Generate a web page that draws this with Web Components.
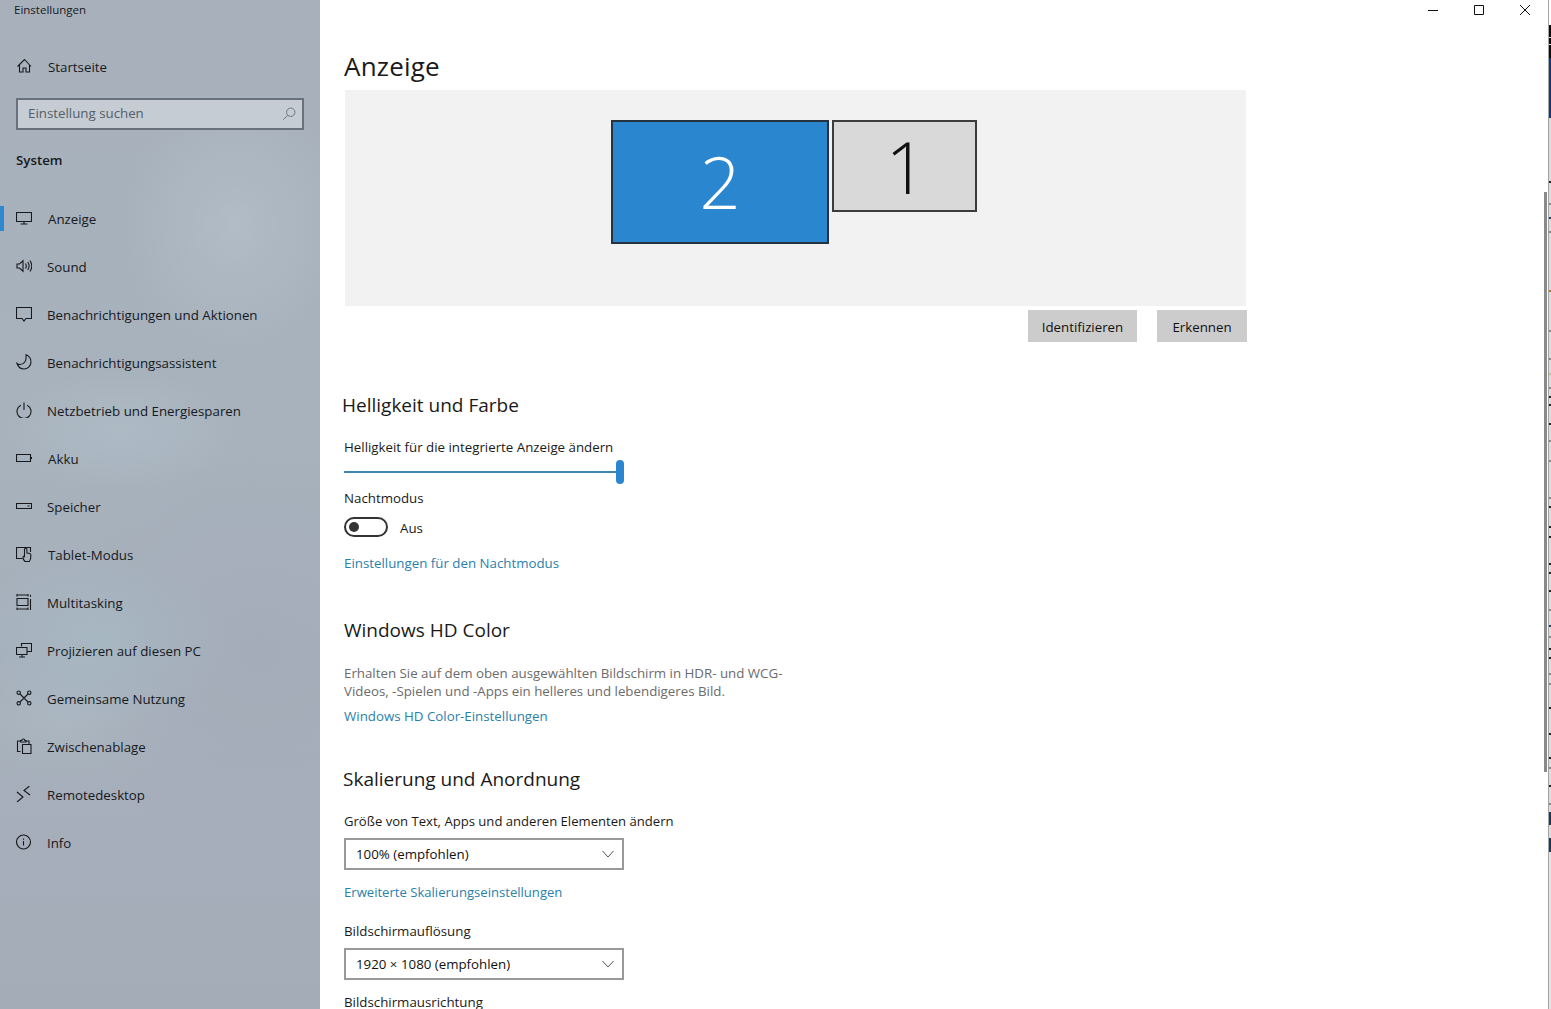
<!DOCTYPE html>
<html lang="de">
<head>
<meta charset="utf-8">
<title>Einstellungen</title>
<style>
  html, body { margin: 0; height: 100%; overflow: hidden; background: #fff; }
  body { font: 13.3px/20px "Open Sans", "Noto Sans", sans-serif; color: #1a1a1a; }
</style>
</head>
<body>
<settings-app></settings-app>

<script>
const ICONS = {
  home: '<path d="M1.500 8.500 8.500 1.500l6.500 7M3.500 6.800v7.200h3.500v-4h3v4h3.500V6.800"/>',
  display: '<path d="M.5 2.500h15v9H.5zM8 11.500v2.500M4.500 14h7"/>',
  sound: '<path d="M1 6h2.500L7 2.800v10.400L3.500 10H1zM9.500 5.500c1 1.500 1 3.500 0 5M11.700 4c1.800 2.500 1.800 5.500 0 8M13.900 2.500c2.400 3.500 2.400 7.500 0 11"/>',
  notify: '<path d="M.5 1.500h15v11H10l-2 2.500-2-2.500H.5z"/>',
  moon: '<path d="M10 .8c2.500 1 5 3.700 5 7.200a7 7 0 0 1-7 7c-3.500 0-6-2.500-7-5.500 1 .8 2 1 3 1 4 0 6.800-3.500 6-9.700z"/>',
  power: '<path d="M4.800 3.200a7 7 0 1 0 6.400 0M8 .5v7.500"/>',
  battery: '<path d="M.5 4.500h14v7H.5zM15.500 7v2"/>',
  storage: '<path d="M.5 5.500h15v5H.5zM11.500 8h2"/>',
  tablet: '<path d="M6.500 12.500H.5v-11h14V6M9 15.500c-1-1-2-2.500-2-4.500 0-1 1-1 1.500-.5V3.500a1.200 1.200 0 0 1 2.400 0V7c2 0 4 .5 4 2.500 0 2.500-.5 4.800-1.500 6z"/>',
  multitask: '<path d="M1 1h11M1 0v2.500M12 0v2.500M1 4.500h11v7H1zM1 15h11M1 13.500V16M12 13.500V16M14.500 .8v2M14.500 5v11"/>',
  project: '<path d="M5.500 4.500V1.500h10v8H11M.5 5.500h10.500v7H.5zM3 15h6M6 12.500V15"/>',
  share: '<circle cx="2.700" cy="2.700" r="1.700"/><circle cx="13.300" cy="2.700" r="1.700"/><circle cx="2.700" cy="13.300" r="1.700"/><circle cx="13.300" cy="13.300" r="1.700"/><path d="m4 4 3 3c.6.600 1.400.600 2 0l3-3M4 12l3-3c.6-.600 1.400-.600 2 0l3 3"/>',
  clip: '<path d="M4.500 13.500H1.500V3h3M10 3h3v3.500M4.500 4V2.500h1.300c0-2 3-2 3 0H10V4zM6.500 6.500h8.500v9H6.500z"/>',
  remote: '<path d="m1 6 6 5-6 5M13.500 0 8 4.500l6 4.500"/>',
  info: '<circle cx="7.500" cy="8" r="7"/><path d="M7.500 7v4.500M7.500 4.500v1.200"/>',
  search: '<circle cx="10" cy="6" r="4.800"/><path d="M6.500 9.500 1.500 14.500"/>'
};

// tick marks of the window behind, y position and colour
const EDGE_MARKS = [
  [181, "#222"], [203, "#888"], [217, "#23405e"], [231, "#888"], [290, "#b0751e"], [330, "#888"],
  [358, "#888"], [373, "#c9bf80"], [387, "#888"], [396, "#222"], [404, "#222"], [423, "#222"],
  [440, "#888"], [460, "#888"], [497, "#888"], [506, "#222"], [526, "#222"], [536, "#222"],
  [563, "#222"], [572, "#222"], [590, "#222"], [609, "#888"], [625, "#23405e"], [636, "#888"],
  [648, "#222"], [657, "#222"], [673, "#888"], [683, "#888"], [707, "#222"], [733, "#222"],
  [757, "#222"], [767, "#888"], [785, "#222"], [803, "#888"]
];

function iconSvg(name) {
  return `<svg viewBox="0 0 16 16" width="16" height="16" fill="none" stroke="currentColor" stroke-width="1.100">${ICONS[name]}</svg>`;
}

class NavItem extends HTMLElement {
  constructor() {
    super();
    this.attachShadow({ mode: "open" });
  }

  connectedCallback() {
    this.shadowRoot.innerHTML = `
      <style>
        :host { display: flex; align-items: center; height: 48px; position: relative; color: #16191d; }
        svg { margin-left: 16px; margin-top: -2px; flex: none; }
        span { margin-left: 15px; white-space: nowrap; }
        :host([nudge]) span { margin-left: 16px; }
        .mark { position: absolute; left: 0; top: 11px; width: 4px; height: 25px; background: #2d88d0; }
      </style>
      ${this.hasAttribute("active") ? '<i class="mark"></i>' : ""}
      ${iconSvg(this.getAttribute("icon"))}
      <span><slot></slot></span>
    `;
  }
}

class SearchBox extends HTMLElement {
  constructor() {
    super();
    this.attachShadow({ mode: "open" });
  }

  connectedCallback() {
    this.shadowRoot.innerHTML = `
      <style>
        :host {
          display: flex; align-items: center; justify-content: space-between; box-sizing: border-box;
          width: 288px; height: 32px; margin: 7px 0 0 16px; padding: 0 6px 2px 10px;
          border: 2px solid #68717c; background: #c5ccd4; color: #565e67;
        }
        svg { color: #6a727b; width: 14px; height: 14px; margin-top: 2px; }
      </style>
      <span><slot></slot></span>
      ${iconSvg("search")}
    `;
  }
}

class NavRail extends HTMLElement {
  constructor() {
    super();
    this.attachShadow({ mode: "open" });
  }

  connectedCallback() {
    this.shadowRoot.innerHTML = `
      <style>
        :host {
          display: block; flex: none; width: 320px; height: 1009px; overflow: hidden;
          background:
            radial-gradient(110px 130px at 235px 225px, rgba(186,198,208,.5), transparent),
            radial-gradient(120px 60px at 120px 430px, rgba(180,194,204,.5), transparent),
            radial-gradient(130px 90px at 100px 640px, rgba(168,188,198,.6), transparent),
            radial-gradient(120px 70px at 60px 720px, rgba(176,190,200,.45), transparent),
            radial-gradient(200px 200px at 260px 650px, rgba(162,168,182,.5), transparent),
            linear-gradient(180deg, #a8b1bb 0%, #a7b2bd 45%, #a4acb8 100%);
        }
        .title { font-size: 11.5px; line-height: 20px; padding-left: 14px; color: #16191d; }
        .home { margin-top: 23px; }
        .group { font-weight: 600; padding-left: 16px; margin: 20px 0 25px; color: #16191d; }
      </style>
      <div class="title">Einstellungen</div>
      <nav-item class="home" icon="home" nudge>Startseite</nav-item>
      <search-box>Einstellung suchen</search-box>
      <div class="group">System</div>
      <nav-item icon="display" active nudge>Anzeige</nav-item>
      <nav-item icon="sound">Sound</nav-item>
      <nav-item icon="notify">Benachrichtigungen und Aktionen</nav-item>
      <nav-item icon="moon">Benachrichtigungsassistent</nav-item>
      <nav-item icon="power">Netzbetrieb und Energiesparen</nav-item>
      <nav-item icon="battery" nudge>Akku</nav-item>
      <nav-item icon="storage">Speicher</nav-item>
      <nav-item icon="tablet" nudge>Tablet-Modus</nav-item>
      <nav-item icon="multitask">Multitasking</nav-item>
      <nav-item icon="project">Projizieren auf diesen PC</nav-item>
      <nav-item icon="share">Gemeinsame Nutzung</nav-item>
      <nav-item icon="clip">Zwischenablage</nav-item>
      <nav-item icon="remote">Remotedesktop</nav-item>
      <nav-item icon="info">Info</nav-item>
    `;
  }
}

class CaptionButtons extends HTMLElement {
  constructor() {
    super();
    this.attachShadow({ mode: "open" });
  }

  connectedCallback() {
    this.shadowRoot.innerHTML = `
      <style>
        :host { display: flex; justify-content: flex-end; height: 20px; }
        svg { width: 46px; height: 20px; fill: none; stroke: #111; stroke-width: 1; }
      </style>
      <svg viewBox="0 0 46 20"><path d="M18 10.500h10"/></svg>
      <svg viewBox="0 0 46 20"><path d="M18.500 5.500h9v9h-9z"/></svg>
      <svg viewBox="0 0 46 20"><path d="m18 5 10 10M28 5 18 15"/></svg>
    `;
  }
}

class DisplayLayout extends HTMLElement {
  constructor() {
    super();
    this.attachShadow({ mode: "open" });
  }

  connectedCallback() {
    this.shadowRoot.innerHTML = `
      <style>
        :host {
          display: flex; align-items: flex-start; gap: 3px; box-sizing: border-box;
          width: 901px; height: 216px; margin: 4px 0 0 1px; padding: 30px 0 0 266px; background: #f2f2f2;
        }
        div {
          box-sizing: border-box; display: flex; align-items: center; justify-content: center;
          font: 300 72px/1 "Open Sans", "Noto Sans", sans-serif;
        }
        .two { width: 218px; height: 124px; padding-bottom: 2px; background: #2b86d0; border: 2px solid #26323f; color: #fff; }
        .one { width: 145px; height: 92px; padding-left: 3px; background: #d9d9d9; border: 2px solid #3c3c3c; color: #111; }
      </style>
      <div class="two">2</div>
      <div class="one">1</div>
    `;
  }
}

class CmdButton extends HTMLElement {
  constructor() {
    super();
    this.attachShadow({ mode: "open" });
  }

  connectedCallback() {
    this.shadowRoot.innerHTML = `
      <style>
        :host { display: flex; align-items: center; justify-content: center; box-sizing: border-box; height: 32px; padding-top: 2px; background: #ccc; color: #111; }
      </style>
      <slot></slot>
    `;
  }
}

class ToggleSwitch extends HTMLElement {
  constructor() {
    super();
    this.attachShadow({ mode: "open" });
  }

  connectedCallback() {
    this.shadowRoot.innerHTML = `
      <style>
        :host { display: flex; align-items: center; gap: 12px; height: 20px; margin-top: 9px; }
        b { box-sizing: border-box; display: flex; align-items: center; width: 44px; height: 20px; padding-left: 3px; border: 2px solid #333; border-radius: 10px; }
        i { width: 10px; height: 10px; border-radius: 50%; background: #333; }
        span { padding-top: 2px; }
      </style>
      <b><i></i></b>
      <span><slot></slot></span>
    `;
  }
}

class BrightnessSlider extends HTMLElement {
  constructor() {
    super();
    this.attachShadow({ mode: "open" });
  }

  connectedCallback() {
    this.shadowRoot.innerHTML = `
      <style>
        :host { display: flex; align-items: center; width: 280px; height: 24px; margin-top: 3px; }
        .track { flex: 1; height: 2px; background: #3f86ae; }
        .thumb { width: 8px; height: 24px; border-radius: 4px; background: #2b86d0; }
      </style>
      <div class="track"></div>
      <div class="thumb"></div>
    `;
  }
}

class DropDown extends HTMLElement {
  constructor() {
    super();
    this.attachShadow({ mode: "open" });
  }

  connectedCallback() {
    this.shadowRoot.innerHTML = `
      <style>
        :host {
          display: flex; align-items: center; justify-content: space-between; box-sizing: border-box;
          width: 280px; height: 32px; margin-top: 7px; padding: 0 8px 0 10px; border: 2px solid #999; color: #111;
        }
        svg { width: 12px; height: 8px; fill: none; stroke: #555; stroke-width: 1; }
      </style>
      <span><slot></slot></span>
      <svg viewBox="0 0 12 8"><path d="m.5 1 5.500 6 5.500-6"/></svg>
    `;
  }
}

class SettingsPage extends HTMLElement {
  constructor() {
    super();
    this.attachShadow({ mode: "open" });
  }

  connectedCallback() {
    this.shadowRoot.innerHTML = `
      <style>
        :host { display: block; flex: 1; min-width: 0; height: 1009px; overflow: hidden; position: relative; background: #fff; color: #1a1a1a; }
        .body { padding-left: 24px; }
        h1 { font-size: 26px; font-weight: 400; line-height: 40px; margin: 26px 0 0; letter-spacing: .2px; }
        h2 { font-size: 19px; font-weight: 400; line-height: 28px; margin: 0; }
        p { margin: 0; }
        .actions { display: flex; justify-content: flex-end; gap: 20px; width: 903px; margin-top: 4px; }
        .actions cmd-button:first-child { width: 109px; }
        .actions cmd-button:last-child { width: 90px; }
        .link { color: #2b7fab; }
        .note { color: #6b6b6b; line-height: 18px; margin-top: 20px; }
        .thumb-bar { position: absolute; right: 1px; top: 192px; width: 3px; height: 580px; background: #8a8a8a; }
      </style>
      <caption-buttons></caption-buttons>
      <i class="thumb-bar"></i>
      <div class="body">
        <h1>Anzeige</h1>
        <display-layout></display-layout>
        <div class="actions">
          <cmd-button>Identifizieren</cmd-button>
          <cmd-button>Erkennen</cmd-button>
        </div>

        <h2 style="margin: 49px 0 0 -2px">Helligkeit und Farbe</h2>
        <p style="margin-top: 18px">Helligkeit für die integrierte Anzeige ändern</p>
        <brightness-slider></brightness-slider>
        <p style="margin-top: 4px">Nachtmodus</p>
        <toggle-switch>Aus</toggle-switch>
        <p class="link" style="margin-top: 16px">Einstellungen für den Nachtmodus</p>

        <h2 style="margin-top: 43px">Windows HD Color</h2>
        <p class="note">Erhalten Sie auf dem oben ausgewählten Bildschirm in HDR- und WCG-<br>Videos, -Spielen und -Apps ein helleres und lebendigeres Bild.</p>
        <p class="link" style="margin-top: 6px">Windows HD Color-Einstellungen</p>

        <h2 style="margin: 39px 0 0 -1px">Skalierung und Anordnung</h2>
        <p style="margin-top: 18px; font-size: 13.1px">Größe von Text, Apps und anderen Elementen ändern</p>
        <drop-down>100% (empfohlen)</drop-down>
        <p class="link" style="margin-top: 12px; font-size: 13.1px">Erweiterte Skalierungseinstellungen</p>
        <p style="margin-top: 19px">Bildschirmauflösung</p>
        <drop-down>1920 × 1080 (empfohlen)</drop-down>
        <p style="margin-top: 12px">Bildschirmausrichtung</p>
      </div>
    `;
  }
}

class DesktopEdge extends HTMLElement {
  constructor() {
    super();
    this.attachShadow({ mode: "open" });
  }

  connectedCallback() {
    const marks = EDGE_MARKS.map(([y, c]) => `linear-gradient(${c},${c}) 0 ${y}px/100% 2px no-repeat`).join(",");
    this.shadowRoot.innerHTML = `
      <style>
        :host { display: flex; flex: none; width: 3px; height: 1009px; }
        .line { width: 1px; background: #a3a3a3; }
        .band {
          flex: 1;
          background: ${marks}, linear-gradient(180deg,
            #fff 0 25px, #0c0c0c 25px 37px, #ddd 37px 38px, #0c0c0c 38px 44px, #ddd 44px 45px, #0c0c0c 45px 58px,
            #12367f 58px 118px, #dcdcdc 118px 812px, #163a58 812px 825px, #dcdcdc 825px 838px,
            #163a58 838px 852px, #e4e4e4 852px 1009px);
        }
      </style>
      <div class="line"></div>
      <div class="band"></div>
    `;
  }
}

class SettingsApp extends HTMLElement {
  constructor() {
    super();
    this.attachShadow({ mode: "open" });
  }

  connectedCallback() {
    this.shadowRoot.innerHTML = `
      <style>
        :host { display: flex; width: 1551px; height: 1009px; overflow: hidden; }
      </style>
      <nav-rail></nav-rail>
      <settings-page></settings-page>
      <desktop-edge></desktop-edge>
    `;
  }
}

customElements.define("nav-item", NavItem);
customElements.define("search-box", SearchBox);
customElements.define("nav-rail", NavRail);
customElements.define("caption-buttons", CaptionButtons);
customElements.define("display-layout", DisplayLayout);
customElements.define("cmd-button", CmdButton);
customElements.define("toggle-switch", ToggleSwitch);
customElements.define("brightness-slider", BrightnessSlider);
customElements.define("drop-down", DropDown);
customElements.define("settings-page", SettingsPage);
customElements.define("desktop-edge", DesktopEdge);
customElements.define("settings-app", SettingsApp);
</script>
</body>
</html>
